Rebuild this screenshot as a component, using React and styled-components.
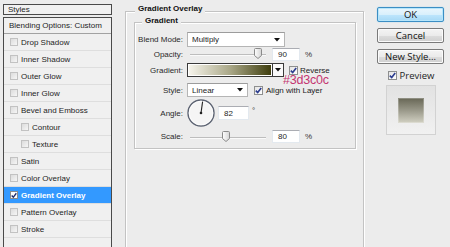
import React from "react";
import styled, { createGlobalStyle } from "styled-components";

const GlobalStyle = createGlobalStyle`
    html, body {
        margin: 0;
        padding: 0;
    }
    body {
        background: #ececec;
        font-family: "Liberation Sans", Arial, sans-serif;
        font-size: 8px;
        color: #1e1e1e;
        overflow: hidden;
    }
`;

const Dialog = styled.div`
    display: flex;
    width: 450px;
    height: 247px;
    overflow: hidden;
    background: #ececec;
`;

/* ---------- left styles list ---------- */

const LeftPanel = styled.div`
    flex: none;
    width: 109px;
    margin-left: 3px;
    padding-top: 4px;
    display: flex;
    flex-direction: column;
`;

const StylesHeader = styled.div`
    height: 17px;
    border: 1px solid #4a4a4a;
    background: #f1f1f1;
    display: flex;
    align-items: center;
    padding-left: 4px;
`;

const StyleList = styled.div`
    margin-top: 2px;
    height: 240px;
    flex: none;
    border: 1px solid #4a4a4a;
    background: #f0f0f0;
`;

const BlendRow = styled.div`
    height: 15px;
    border-bottom: 1px solid #a2a2a2;
    display: flex;
    align-items: center;
    padding-left: 5px;
`;

const StyleItem = styled.div`
    height: 16px;
    border-bottom: 1px solid #dedede;
    display: flex;
    align-items: center;
    padding-left: ${(p) => (p.$indent ? 17 : 6)}px;
    background: ${(p) => (p.$selected ? "#3399ff" : "transparent")};
    color: ${(p) => (p.$selected ? "#fff" : "#1e1e1e")};
    font-weight: ${(p) => (p.$selected ? "bold" : "normal")};
`;

const ListBox = styled.span`
    flex: none;
    width: 8px;
    height: 8px;
    margin-right: 3px;
    border: 1px solid ${(p) => (p.$checked ? "#8a8a8a" : "#c2c2c2")};
    background: ${(p) =>
        p.$checked ? "#fdfdfd" : "linear-gradient(135deg, #dcdcdc, #f6f6f6)"};
    box-sizing: border-box;
    display: flex;
    align-items: center;
    justify-content: center;
`;

/* ---------- group boxes ---------- */

const OuterGroup = styled.div`
    position: relative;
    flex: none;
    width: 237px;
    height: 260px;
    margin: 11px 0 0 13px;
    border: 1px solid #c3c3c3;
    box-shadow: inset 1px 1px 0 #fff, 1px 1px 0 #fff;
`;

const InnerGroup = styled.div`
    position: relative;
    width: 220px;
    height: 116px;
    margin: 10px 0 0 8px;
    padding-top: 9px;
    border: 1px solid #c3c3c3;
    box-shadow: inset 1px 1px 0 #fff, 1px 1px 0 #fff;
`;

const GroupTitle = styled.span`
    position: absolute;
    top: ${(p) => p.$top}px;
    left: ${(p) => p.$left}px;
    padding: 0 3px;
    background: #ececec;
    font-weight: bold;
    line-height: 10px;
    color: #111;
`;

const Row = styled.div`
    display: flex;
    align-items: center;
    height: ${(p) => p.$h}px;
    margin-top: ${(p) => p.$mt || 0}px;
`;

const Label = styled.span`
    flex: none;
    width: 48px;
    margin-right: 4px;
    text-align: right;
    color: #2a2a2a;
`;

const Select = styled.div`
    flex: none;
    width: ${(p) => p.$w}px;
    height: ${(p) => p.$h}px;
    box-sizing: border-box;
    background: #fff;
    border: 1px solid #b5b5b5;
    border-top-color: #9c9c9c;
    display: flex;
    align-items: center;
    justify-content: space-between;
    padding: 0 4px 0 4px;
`;

const NumberBox = styled.div`
    flex: none;
    width: ${(p) => p.$w}px;
    height: ${(p) => p.$h}px;
    margin-left: ${(p) => p.$ml}px;
    box-sizing: border-box;
    background: #fff;
    border: 1px solid #e3e9ef;
    border-top-color: #abadb3;
    display: flex;
    align-items: center;
    padding-left: 5px;
`;

const Unit = styled.span`
    margin-left: ${(p) => p.$ml}px;
    align-self: ${(p) => (p.$top ? "flex-start" : "center")};
    margin-top: ${(p) => (p.$top ? 7 : 0)}px;
    color: #333;
`;

const SliderWrap = styled.div`
    position: relative;
    flex: none;
    width: 76px;
    height: 12px;
    margin-left: 3px;
`;

const Track = styled.div`
    position: absolute;
    left: 0;
    right: 0;
    top: 6px;
    height: 1px;
    background: #bdbdbd;
    border-bottom: 1px solid #fafafa;
`;

const Thumb = styled.svg`
    position: absolute;
    top: 0;
    margin-left: -4px;
`;

const GradientPicker = styled.div`
    flex: none;
    display: flex;
    height: 14px;
    border: 1px solid #3a3a3a;
    box-sizing: border-box;
`;

const GradientBar = styled.div`
    width: 84px;
    background: linear-gradient(to right, #f8f6ee 0%, #aaa888 50%, #3d3c0c 100%);
    box-shadow: inset 0 0 0 1px #fff;
`;

const GradientArrow = styled.div`
    width: 10px;
    background: #fafafa;
    border-left: 1px solid #3a3a3a;
    display: flex;
    align-items: center;
    justify-content: center;
`;

const CheckBox = styled.span`
    flex: none;
    width: 9px;
    height: 9px;
    margin-left: ${(p) => p.$ml || 0}px;
    margin-right: ${(p) => p.$mr || 2}px;
    box-sizing: border-box;
    border: 1px solid #8e8f8f;
    background: linear-gradient(135deg, #e4e4e4, #ffffff);
    display: flex;
    align-items: center;
    justify-content: center;
`;

const SmallText = styled.span`
    color: #222;
    white-space: nowrap;
`;

const HexNote = styled.span`
    position: absolute;
    left: 148px;
    top: 51px;
    font-size: 12.5px;
    line-height: 13px;
    color: #c43571;
    letter-spacing: -0.2px;
`;

/* ---------- right column ---------- */

const RightColumn = styled.div`
    flex: none;
    width: 67px;
    margin-left: 13px;
    padding-top: 7px;
    display: flex;
    flex-direction: column;
`;

const Button = styled.button`
    width: 67px;
    height: 15px;
    margin: ${(p) => p.$mt || 0}px 0 0 0;
    padding: 0;
    font-family: "Open Sans", "Liberation Sans", sans-serif;
    font-size: 9.5px;
    line-height: 13px;
    color: #111;
    border: 1px solid #7a7a7a;
    border-radius: 2px;
    background: linear-gradient(#f4f4f4 0%, #ebebeb 50%, #dddddd 51%, #cfcfcf 100%);
    box-shadow: inset 0 0 0 1px #fbfbfb;
`;

const OkButton = styled(Button)`
    border-color: #3c8ec4;
    background: linear-gradient(#eaf6fd 0%, #d9f0fc 50%, #bee6fd 51%, #a7d9f5 100%);
    box-shadow: inset 0 0 0 1px #b7e6fb, 0 0 1px #5fc4f0;
`;

const PreviewRow = styled.div`
    display: flex;
    align-items: center;
    justify-content: center;
    height: 10px;
    margin-top: 6px;
    font-family: "Open Sans", "Liberation Sans", sans-serif;
    font-size: 9.5px;
    padding-left: 1px;
`;

const PreviewBox = styled.div`
    align-self: center;
    width: 50px;
    height: 50px;
    margin-top: 5px;
    box-sizing: border-box;
    border: 1px solid #d2d2d2;
    background: linear-gradient(#e2e2e2, #f1f1f1);
    display: flex;
    align-items: center;
    justify-content: center;
`;

const PreviewSwatch = styled.div`
    width: 26px;
    height: 25px;
    background: linear-gradient(#676655 0%, #9a998a 50%, #d2d1c3 100%);
    box-shadow: inset 0 0 0 1px rgba(255, 255, 255, 0.25);
`;

/* ---------- drawings ---------- */

const Tick = ({ color = "#2c3d8f" }) => (
    <svg width="7" height="7" viewBox="0 0 7 7">
        <path
            d="M0.8 3.6 L2.7 5.6 L6.2 0.9"
            fill="none"
            stroke={color}
            strokeWidth="1.6"
        />
    </svg>
);

const DownArrow = () => (
    <svg width="6" height="4" viewBox="0 0 6 4">
        <path d="M0 0 H6 L3 3.5 Z" fill="#111" />
    </svg>
);

const Slider = ({ pos }) => (
    <SliderWrap>
        <Track />
        <Thumb
            width="8"
            height="11"
            viewBox="0 0 8 11"
            style={{ left: `${pos * 100}%` }}
        >
            <defs>
                <linearGradient id="thumbFill" x1="0" x2="1">
                    <stop offset="0" stopColor="#ffffff" />
                    <stop offset="1" stopColor="#d4d4d4" />
                </linearGradient>
            </defs>
            <path
                d="M1.5 0.5 H6.5 Q7.5 0.5 7.5 1.5 V7.5 L4 10.5 L0.5 7.5 V1.5 Q0.5 0.5 1.5 0.5 Z"
                fill="url(#thumbFill)"
                stroke="#8a8a8a"
            />
        </Thumb>
    </SliderWrap>
);

const AngleDial = ({ angle }) => {
    const rad = (angle * Math.PI) / 180;
    const x = 14 + 11.5 * Math.cos(rad);
    const y = 14 - 11.5 * Math.sin(rad);
    return (
        <svg width="28" height="28" viewBox="0 0 28 28">
            <circle cx="14" cy="14" r="13" fill="#f5f5f5" stroke="#5d6473" strokeWidth="1.4" />
            <circle cx="14" cy="14" r="11.8" fill="none" stroke="#ffffff" strokeWidth="0.8" />
            <line x1="14" y1="14" x2={x} y2={y} stroke="#222" strokeWidth="1.1" />
            <circle cx="14" cy="14" r="1.3" fill="#222" />
        </svg>
    );
};

const styleItems = [
    { name: "Drop Shadow" },
    { name: "Inner Shadow" },
    { name: "Outer Glow" },
    { name: "Inner Glow" },
    { name: "Bevel and Emboss" },
    { name: "Contour", indent: true },
    { name: "Texture", indent: true },
    { name: "Satin" },
    { name: "Color Overlay" },
    { name: "Gradient Overlay", selected: true },
    { name: "Pattern Overlay" },
    { name: "Stroke" },
];

export default function App() {
    return (
        <>
            <GlobalStyle />
            <Dialog>
                <LeftPanel>
                    <StylesHeader>Styles</StylesHeader>
                    <StyleList>
                        <BlendRow>Blending Options: Custom</BlendRow>
                        {styleItems.map((item) => (
                            <StyleItem
                                key={item.name}
                                $indent={item.indent}
                                $selected={item.selected}
                            >
                                <ListBox $checked={item.selected}>
                                    {item.selected && <Tick color="#1d2b6b" />}
                                </ListBox>
                                {item.name}
                            </StyleItem>
                        ))}
                    </StyleList>
                </LeftPanel>

                <OuterGroup>
                    <GroupTitle $top={-8} $left={9}>
                        Gradient Overlay
                    </GroupTitle>
                    <InnerGroup>
                        <GroupTitle $top={-7} $left={7}>
                            Gradient
                        </GroupTitle>

                        <Row $h={15}>
                            <Label>Blend Mode:</Label>
                            <Select $w={98} $h={15}>
                                Multiply
                                <DownArrow />
                            </Select>
                        </Row>

                        <Row $h={14}>
                            <Label>Opacity:</Label>
                            <Slider pos={0.9} />
                            <NumberBox $w={28} $h={13} $ml={6}>
                                90
                            </NumberBox>
                            <Unit $ml={5}>%</Unit>
                        </Row>

                        <Row $h={14} $mt={2}>
                            <Label>Gradient:</Label>
                            <GradientPicker>
                                <GradientBar />
                                <GradientArrow>
                                    <DownArrow />
                                </GradientArrow>
                            </GradientPicker>
                            <CheckBox $ml={5}>
                                <Tick />
                            </CheckBox>
                            <SmallText>Reverse</SmallText>
                        </Row>

                        <Row $h={14} $mt={6}>
                            <Label>Style:</Label>
                            <Select $w={61} $h={14}>
                                Linear
                                <DownArrow />
                            </Select>
                            <CheckBox $ml={6} $mr={3}>
                                <Tick />
                            </CheckBox>
                            <SmallText>Align with Layer</SmallText>
                        </Row>

                        <Row $h={28} $mt={2}>
                            <Label>Angle:</Label>
                            <AngleDial angle={82} />
                            <NumberBox $w={31} $h={14} $ml={3}>
                                82
                            </NumberBox>
                            <Unit $ml={3} $top>
                                °
                            </Unit>
                        </Row>

                        <Row $h={13} $mt={3}>
                            <Label>Scale:</Label>
                            <Slider pos={0.48} />
                            <NumberBox $w={28} $h={13} $ml={6}>
                                80
                            </NumberBox>
                            <Unit $ml={5}>%</Unit>
                        </Row>

                        <HexNote>#3d3c0c</HexNote>
                    </InnerGroup>
                </OuterGroup>

                <RightColumn>
                    <OkButton>OK</OkButton>
                    <Button $mt={6}>Cancel</Button>
                    <Button $mt={6}>New Style...</Button>
                    <PreviewRow>
                        <CheckBox $mr={3}>
                            <Tick />
                        </CheckBox>
                        Preview
                    </PreviewRow>
                    <PreviewBox>
                        <PreviewSwatch />
                    </PreviewBox>
                </RightColumn>
            </Dialog>
        </>
    );
}
